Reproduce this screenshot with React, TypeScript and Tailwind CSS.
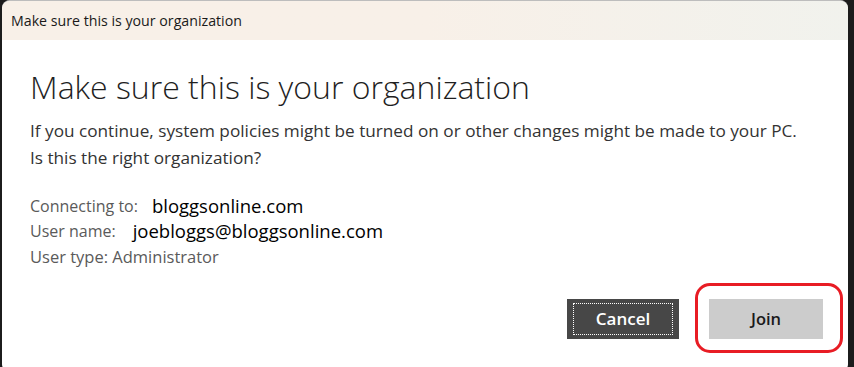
const UI = { fontFamily: '"Open Sans", "Noto Sans", sans-serif' };

function InfoRow({ label, value, gap }: { label: string; value: string; gap: string }) {
  return (
    <div className="flex h-[25.5px] items-center">
      <span className="text-[16px] text-[#5a5a5a]">{label}</span>
      <span className={`${gap} text-[18.5px] text-black`}>{value}</span>
    </div>
  );
}

export default function App() {
  return (
    <div className="h-[367px] w-[854px] overflow-hidden bg-[#1c1c1c] pl-[2px]" style={UI}>
      <div className="flex h-[372px] w-[846px] flex-col overflow-hidden rounded-[8px] border-t border-[#bdbdbd] bg-white">
        <div className="flex h-[39px] shrink-0 items-center bg-gradient-to-r from-[#f8f0e8] via-[#f8f0e8] to-[#f1f2ed] pl-[9px] text-[14.2px] text-[#1a1a1a]">
          Make sure this is your organization
        </div>

        <div className="flex flex-1 flex-col pl-[28px] pr-[25px]">
          <h1 className="mt-[27px] text-[32px] font-light leading-[40px] text-[#1f1f1f]">
            Make sure this is your organization
          </h1>
          <p className="mt-[10px] text-[17.2px] leading-[27px] text-[#333]">
            If you continue, system policies might be turned on or other changes might be made to your PC.
            <br />
            Is this the right organization?
          </p>

          <div className="mt-[22px] flex flex-col">
            <InfoRow label="Connecting to:" value="bloggsonline.com" gap="ml-[14px]" />
            <InfoRow label="User name:" value="joebloggs@bloggsonline.com" gap="ml-[17px]" />
            <div className="flex h-[26px] items-center text-[16.5px] text-[#5a5a5a]">User type: Administrator</div>
          </div>

          <div className="mt-[29px] flex justify-end gap-[30px]">
            <button className="flex h-[40px] w-[112px] items-center justify-center bg-[#474747] p-[4px_6px]">
              <span className="flex h-full w-full items-center justify-center border border-dotted border-white text-[17px] font-semibold text-white">
                Cancel
              </span>
            </button>
            <div className="relative">
              <button className="flex h-[40px] w-[114px] items-center justify-center bg-[#cccccc] text-[16.5px] font-semibold text-[#1a1a1a]">
                Join
              </button>
              <span className="pointer-events-none absolute -bottom-[14px] -left-[14px] -right-[20px] -top-[16px] rounded-[15px] border-[3.5px] border-[#e81c24]" />
            </div>
          </div>
        </div>
      </div>
    </div>
  );
}
